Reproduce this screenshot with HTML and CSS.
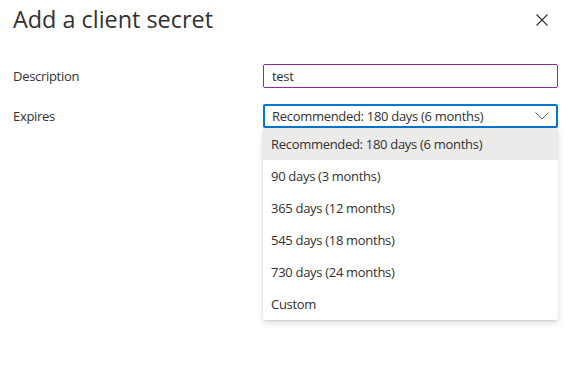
FILE: index.html
```html
<!DOCTYPE html>
<html lang="en">

<head>
    <meta charset="UTF-8">
    <meta name="viewport" content="width=device-width, initial-scale=1.0">
    <title>Add a client secret</title>
    <link rel="stylesheet" href="styles.css">
</head>

<body>
<div class="panel">
    <div class="panel-header">
        <h1 class="panel-title">Add a client secret</h1>
        <button class="close-btn" type="button" aria-label="Close">
            <svg width="12" height="12" viewBox="0 0 12 12">
                <path d="M0.5 0.5 L11.5 11.5 M11.5 0.5 L0.5 11.5" stroke="#323130" stroke-width="1.1" fill="none"/>
            </svg>
        </button>
    </div>

    <div class="form-row">
        <label for="description">Description</label>
        <input class="text-field" type="text" id="description" value="test">
    </div>

    <div class="form-row">
        <label>Expires</label>
        <div class="dropdown">
            <div class="dropdown-title">
                <span>Recommended: 180 days (6 months)</span>
                <svg class="chevron" width="14" height="8" viewBox="0 0 14 8">
                    <path d="M0.5 0.5 L7 7 L13.5 0.5" stroke="#605e5c" stroke-width="1" fill="none"/>
                </svg>
            </div>
            <ul class="dropdown-list">
                <li class="dropdown-item selected">Recommended: 180 days (6 months)</li>
                <li class="dropdown-item">90 days (3 months)</li>
                <li class="dropdown-item">365 days (12 months)</li>
                <li class="dropdown-item">545 days (18 months)</li>
                <li class="dropdown-item">730 days (24 months)</li>
                <li class="dropdown-item">Custom</li>
            </ul>
        </div>
    </div>
</div>
</body>

</html>
```

FILE: styles.css
```css
html, body {
    height: 100%;
}

body {
    margin: 0;
    min-height: 384px;
    background: #fff;
    font-family: "Open Sans", "Noto Sans", sans-serif;
    color: #323130;
}

.panel {
    padding: 0 15px 0 13px;
}

.panel-header {
    display: flex;
    justify-content: space-between;
    align-items: flex-start;
    height: 64px;
}

.panel-title {
    margin: 3px 0 0 0;
    font-size: 23.4px;
    font-weight: 400;
    line-height: 32px;
}

.close-btn {
    border: none;
    background: none;
    padding: 0;
    margin: 14px 10px 0 0;
    width: 12px;
    height: 12px;
    display: block;
}

.close-btn svg {
    display: block;
}

.form-row {
    display: flex;
    align-items: center;
    margin-bottom: 16px;
    font-size: 13px;
    letter-spacing: -0.3px;
}

.form-row label {
    width: 250px;
    flex-shrink: 0;
}

.text-field {
    box-sizing: border-box;
    width: 295px;
    height: 24px;
    margin: 0;
    padding: 0 8px;
    border: 1px solid #8a2da5;
    border-radius: 2px;
    font-family: inherit;
    font-size: 13px;
    letter-spacing: -0.3px;
    color: #323130;
    outline: none;
}

.dropdown {
    position: relative;
    width: 295px;
}

.dropdown-title {
    box-sizing: border-box;
    height: 24px;
    display: flex;
    align-items: center;
    justify-content: space-between;
    padding: 0 7px 0 7px;
    border: 2px solid #0078d4;
    border-radius: 2px;
}

.chevron {
    display: block;
}

.dropdown-list {
    position: absolute;
    top: 24px;
    left: 0;
    right: 0;
    margin: 0;
    padding: 0;
    list-style: none;
    background: #fff;
    border-radius: 2px;
    box-shadow: 0 3px 7px rgba(0, 0, 0, 0.13), 0 0.6px 2px rgba(0, 0, 0, 0.11);
}

.dropdown-item {
    height: 32px;
    line-height: 32px;
    padding: 0 8px;
}

.dropdown-item.selected {
    background: #edebe9;
}
```
